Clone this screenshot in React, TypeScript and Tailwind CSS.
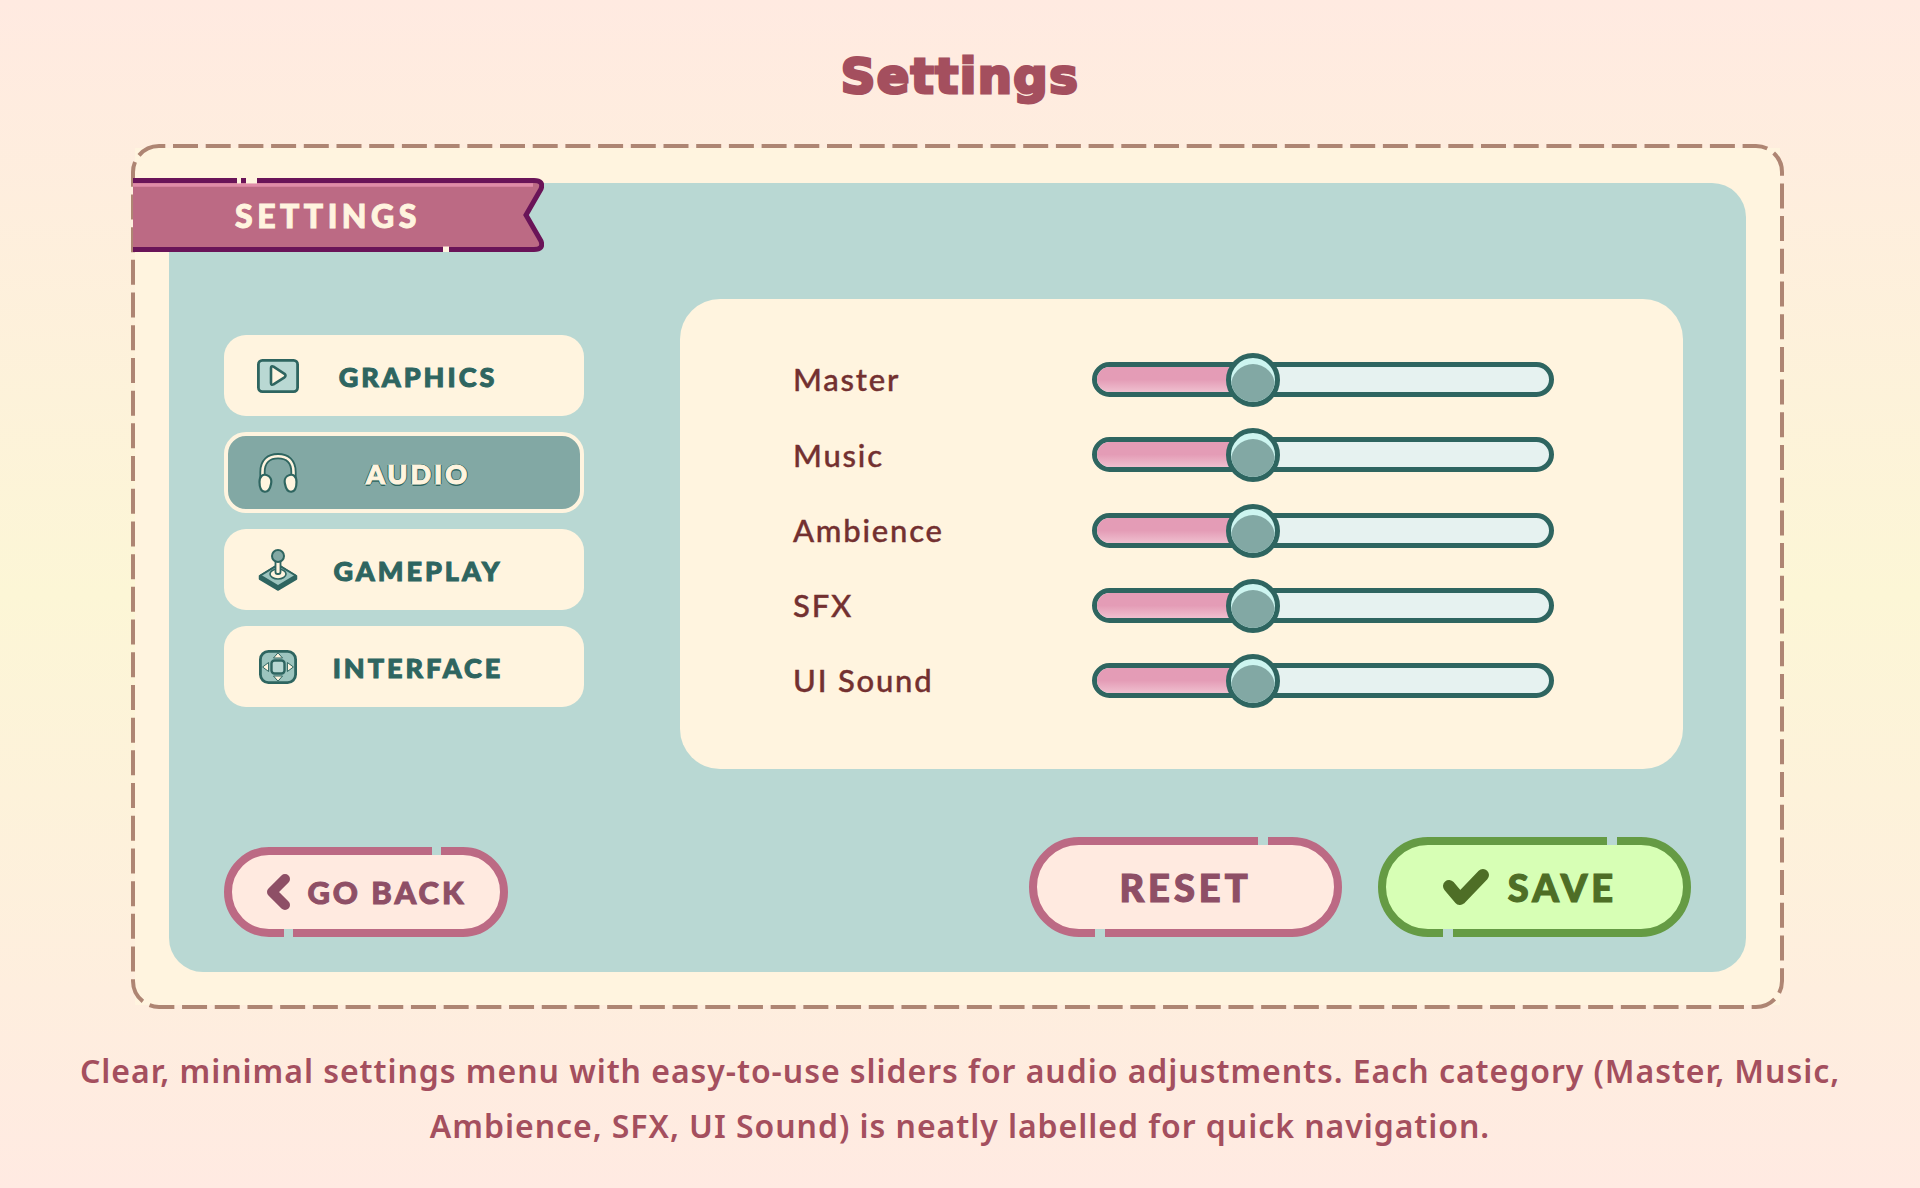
const TEAL = "#2E6560";

const NAV_ITEMS = ["GRAPHICS", "AUDIO", "GAMEPLAY", "INTERFACE"];
const SLIDERS = ["Master", "Music", "Ambience", "SFX", "UI Sound"];

function PlayIcon() {
  return (
    <svg width="42" height="34" viewBox="0 0 42 34" fill="none">
      <rect x="1.4" y="1.4" width="39.2" height="31.2" rx="4" fill="#B9D8D3" stroke={TEAL} strokeWidth="2.8" />
      <path d="M14 9 Q14 6.5 16.5 7.6 L27.5 14.8 Q29.5 16.6 27.5 18.4 L16.5 25.4 Q14 26.5 14 24 Z" fill="#FFF4DF" stroke={TEAL} strokeWidth="2.6" strokeLinejoin="round" />
    </svg>
  );
}

function HeadphonesIcon() {
  return (
    <svg width="40" height="40" viewBox="0 0 40 40" fill="none">
      <path d="M4.5 26 V19 C4.5 8 11 3.2 20 3.2 C29 3.2 35.5 8 35.5 19 V26" stroke={TEAL} strokeWidth="6.2" strokeLinecap="round" />
      <path d="M4.5 26 V19 C4.5 8 11 3.2 20 3.2 C29 3.2 35.5 8 35.5 19 V26" stroke="#FFF4DF" strokeWidth="2.6" strokeLinecap="round" />
      <path d="M1.5 29 C1.5 23 5 21 8.5 22 C12.5 23 14 27 13 31 C12 36.5 9.5 39 6.5 38.7 C2.5 38.2 1.5 34 1.5 29 Z" fill="#FFF4DF" stroke={TEAL} strokeWidth="2.2" />
      <path d="M38.5 29 C38.5 23 35 21 31.5 22 C27.5 23 26 27 27 31 C28 36.5 30.5 39 33.5 38.7 C37.5 38.2 38.5 34 38.5 29 Z" fill="#FFF4DF" stroke={TEAL} strokeWidth="2.2" />
    </svg>
  );
}

function JoystickIcon() {
  return (
    <svg width="40" height="42" viewBox="0 0 40 42" fill="none">
      <path d="M1.5 27 L20 15.5 L38.5 27 V30 L20 41 L1.5 30 Z" fill={TEAL} stroke={TEAL} strokeWidth="1.5" strokeLinejoin="round" />
      <path d="M2.5 26.5 L20 16 L37.5 26.5 L20 37 Z" fill="#9CC4BE" stroke={TEAL} strokeWidth="1.6" strokeLinejoin="round" />
      <ellipse cx="20" cy="25" rx="8" ry="5" fill="#FFF4DF" stroke={TEAL} strokeWidth="1.6" />
      <rect x="17.5" y="10" width="5" height="15" rx="2" fill="#FFF4DF" stroke={TEAL} strokeWidth="1.8" />
      <circle cx="20" cy="7" r="6" fill="#82A8A4" stroke={TEAL} strokeWidth="2" />
    </svg>
  );
}

function PadIcon() {
  return (
    <svg width="38" height="34" viewBox="0 0 38 34" fill="none">
      <rect x="1.4" y="1.4" width="35.2" height="31.2" rx="8" fill="#9CC4BE" stroke={TEAL} strokeWidth="2.8" />
      <rect x="12.5" y="10.5" width="13" height="13" rx="3" fill="#B9D8D3" stroke={TEAL} strokeWidth="2.4" />
      <path d="M19 2.8 L23.5 8 H14.5 Z M19 31.2 L23.5 26 H14.5 Z" fill="#FFF4DF" stroke={TEAL} strokeWidth="1" strokeLinejoin="round" />
      <path d="M3.6 17 L9.6 12.5 V21.5 Z M34.4 17 L28.4 12.5 V21.5 Z" fill="#FFF4DF" stroke={TEAL} strokeWidth="1" strokeLinejoin="round" />
    </svg>
  );
}

function NavIcon({ name }: { name: string }) {
  if (name === "GRAPHICS") return <PlayIcon />;
  if (name === "AUDIO") return <HeadphonesIcon />;
  if (name === "GAMEPLAY") return <JoystickIcon />;
  return <PadIcon />;
}

function NavButton({ name }: { name: string }) {
  const active = name === "AUDIO";
  return (
    <div
      className={
        active
          ? "flex h-[81px] items-center rounded-[22px] border-[4px] border-[#FFF4DF] bg-[#82A8A4] pl-[29px]"
          : "flex h-[81px] items-center rounded-[22px] bg-[#FFF4DF] pl-[33px]"
      }
    >
      <div className="flex w-[42px] justify-center">
        <NavIcon name={name} />
      </div>
      <span
        className={
          active
            ? "ml-[19px] mt-[3px] w-[200px] text-center font-['Lato'] text-[27px] font-black tracking-[3px] text-[#FFF4DF] [-webkit-text-stroke:1px_#FFF4DF] [text-shadow:0_2px_0_#2E6560,1.5px_0_0_#2E6560,-1.5px_0_0_#2E6560,0_-1px_0_#2E6560]"
            : "ml-[19px] mt-[3px] w-[200px] text-center font-['Lato'] text-[27px] font-black tracking-[3px] text-[#2E6560] [-webkit-text-stroke:1px_#2E6560]"
        }
      >
        {name}
      </span>
    </div>
  );
}

function SliderRow({ label }: { label: string }) {
  return (
    <div className="flex h-[75.25px] items-center">
      <span className="w-[299px] font-['Lato'] text-[31px] font-medium tracking-[1.8px] text-[#733030] [-webkit-text-stroke:0.4px_#733030]">{label}</span>
      <div className="relative h-[35px] w-[462px]">
        <div className="flex h-full w-full overflow-hidden rounded-full border-[5px] border-[#2E6560] bg-[#E6F2F0]">
          <div className="h-full w-[135px] bg-gradient-to-b from-[#E49CB6] from-50% to-[#EFBFCF]" />
        </div>
        <div className="absolute left-[134px] top-[-9px] h-[54px] w-[54px] overflow-hidden rounded-full border-[5px] border-[#2E6560] bg-[#CDF5F0]">
          <div className="mt-[6px] h-[44px] w-[44px] rounded-full bg-[#82A8A4]" />
        </div>
      </div>
    </div>
  );
}

export default function App() {
  return (
    <div className="flex h-[1188px] w-[1920px] flex-col items-center overflow-hidden bg-[linear-gradient(180deg,#FFEAE1_0%,#FCF6D6_50%,#FFEAE2_100%)]">
      <h1 className="flex h-[148px] items-center pt-[3px] font-['DejaVu_Sans'] text-[48px] font-bold leading-none tracking-[1.5px] text-[#A44F5E] [-webkit-text-stroke:3px_#A44F5E]">
        Settings
      </h1>

      {/* card, dashed outline sits over its edge */}
      <div className="relative mr-[5px] h-[857px] w-[1645px] bg-[#FFF4DF] px-[34px] pb-[33px] pt-[35px]">
        <svg className="absolute left-[-4px] top-[-4px]" width="1653" height="865" fill="none">
          <rect x="2" y="2" width="1649" height="861" rx="26" stroke="#AE8573" strokeWidth="4" strokeDasharray="25 7.7" strokeDashoffset="-14" />
        </svg>

        <div className="absolute left-[-2px] top-[30px] h-[74px] w-[411px]">
          <svg className="absolute inset-0" width="411" height="74" fill="none">
            <path d="M0 2 H401 Q411 2 408 11 L393 37 L408 63 Q411 72 401 72 H0 Z" fill="#BC6A84" />
            <path d="M0 7 H400" stroke="#E08CA8" strokeWidth="3.5" />
            <path d="M396 42 L405 60" stroke="#E08CA8" strokeWidth="2.5" />
            <path d="M0 2.5 H401 Q411 2.5 408 11 L393 37 L408 63 Q411 71.5 401 71.5 H0" stroke="#6A1458" strokeWidth="5" />
            <path d="M104 2.5 H108 M113 2.5 H124 M310 71.5 H316" stroke="#FFF4DF" strokeWidth="6" />
          </svg>
          <span className="absolute left-[102px] top-[16px] font-['Lato'] text-[32px] font-black leading-[44px] tracking-[4.5px] text-[#FFF4DF] [-webkit-text-stroke:1px_#FFF4DF]">
            SETTINGS
          </span>
        </div>

        <div className="flex h-full flex-col rounded-[34px] bg-[#B9D8D3] pl-[55px] pr-[55px] pt-[116px] pb-[35px]">
          <div className="flex items-start">
            <div className="mt-[36px] flex w-[360px] flex-col gap-[16px]">
              {NAV_ITEMS.map((name) => (
                <NavButton key={name} name={name} />
              ))}
            </div>
            <div className="ml-[96px] h-[470px] w-[1003px] rounded-[40px] bg-[#FFF4DF] pl-[113px] pt-[43px]">
              {SLIDERS.map((label) => (
                <SliderRow key={label} label={label} />
              ))}
            </div>
          </div>

          <div className="mt-auto flex items-end">
            <button className="relative flex h-[90px] w-[284px] items-center justify-center gap-[16px] rounded-full border-[8px] border-[#BC6A84] bg-[#FFEAE0]">
              <svg width="26" height="38" viewBox="0 0 26 38" fill="none">
                <path d="M20 6 L7 19 L20 32" stroke="#8E4F66" strokeWidth="10" strokeLinecap="round" strokeLinejoin="round" />
              </svg>
              <span className="font-['Lato'] text-[31px] font-black tracking-[3px] text-[#8E4F66] [-webkit-text-stroke:1px_#8E4F66]">GO BACK</span>
              <span className="absolute left-[200px] top-[-8px] h-[8px] w-[9px] bg-[#B9D8D3]" />
              <span className="absolute left-[52px] bottom-[-8px] h-[8px] w-[9px] bg-[#B9D8D3]" />
            </button>
            <button className="relative ml-auto flex h-[100px] w-[313px] items-center justify-center rounded-full border-[8px] border-[#BC6A84] bg-[#FFEAE0]">
              <span className="font-['Lato'] text-[38px] font-black tracking-[4px] text-[#8E4F66] [-webkit-text-stroke:1.2px_#8E4F66]">RESET</span>
              <span className="absolute left-[221px] top-[-8px] h-[8px] w-[10px] bg-[#B9D8D3]" />
              <span className="absolute left-[58px] bottom-[-8px] h-[8px] w-[10px] bg-[#B9D8D3]" />
            </button>
            <button className="relative ml-[36px] flex h-[100px] w-[313px] items-center justify-center gap-[18px] rounded-full border-[8px] border-[#659B44] bg-[#D7FFB5] pr-[10px]">
              <svg width="48" height="38" viewBox="0 0 48 38" fill="none">
                <path d="M7 18 L18 31 L41 7" stroke="#4E6E26" strokeWidth="12" strokeLinecap="round" strokeLinejoin="round" />
              </svg>
              <span className="font-['Lato'] text-[38px] font-black tracking-[4px] text-[#4E6E26] [-webkit-text-stroke:1.2px_#4E6E26]">SAVE</span>
              <span className="absolute left-[221px] top-[-8px] h-[8px] w-[10px] bg-[#B9D8D3]" />
              <span className="absolute left-[57px] bottom-[-8px] h-[8px] w-[10px] bg-[#B9D8D3]" />
            </button>
          </div>
        </div>
      </div>

      <p className="mt-[38px] w-[1880px] text-center font-['Noto_Sans'] text-[32px] font-semibold leading-[55px] tracking-[0.95px] text-[#A44F5E]">
        Clear, minimal settings menu with easy-to-use sliders for audio adjustments. Each category (Master, Music,
        <br />
        Ambience, SFX, UI Sound) is neatly labelled for quick navigation.
      </p>
    </div>
  );
}
